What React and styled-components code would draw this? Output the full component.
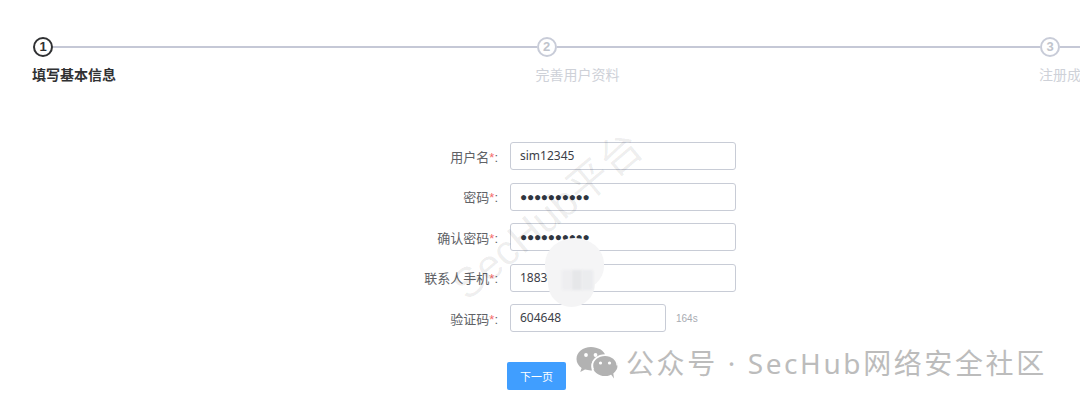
import React from 'react'
import styled, { createGlobalStyle } from 'styled-components'

const GlobalStyle = createGlobalStyle`
  html, body {
    margin: 0;
    background: #fff;
    font-family: "Liberation Sans", "Noto Sans CJK SC", sans-serif;
  }
`

const Page = styled.div`
  position: relative;
  width: 1080px;
  height: 408px;
  overflow: hidden;
  background: #fff;
`

const Steps = styled.div`
  display: flex;
  padding: 37px 0 0 33px;
  width: 1600px;
`

const Step = styled.div`
  width: 503.5px;
  flex: none;
`

const StepHead = styled.div`
  display: flex;
  align-items: center;
  height: 20px;
`

const Circle = styled.span`
  flex: none;
  box-sizing: border-box;
  width: 20px;
  height: 20px;
  border-radius: 50%;
  border: 2px solid ${p => (p.$active ? '#303133' : '#c8ccd8')};
  color: ${p => (p.$active ? '#303133' : '#c0c4cc')};
  font-size: 13px;
  font-weight: 700;
  line-height: 16px;
  text-align: center;
`

const Line = styled.span`
  flex: 1;
  height: 2px;
  background: #c5c8d6;
`

const StepTitle = styled.div`
  margin: 8px 0 0 -1px;
  font-size: 14px;
  line-height: 20px;
  font-weight: ${p => (p.$active ? 700 : 400)};
  color: ${p => (p.$active ? '#303133' : '#ced1d8')};
`

const Form = styled.form`
  margin: 57px 0 0 343px;
  width: 420px;
  display: flex;
  flex-direction: column;
  gap: 12.5px;
`

const Row = styled.div`
  display: flex;
  align-items: center;
  height: 28px;
`

const Label = styled.label`
  width: 155px;
  flex: none;
  text-align: right;
  font-size: 13px;
  color: #606266;
`

const Star = styled.span`
  color: #f56c6c;
`

const Input = styled.div`
  margin-left: 12px;
  box-sizing: border-box;
  width: ${p => (p.$short ? '156px' : '226px')};
  height: 28px;
  padding: 0 9px;
  border: 1px solid #c8ccd6;
  border-radius: 3px;
  font-family: "Noto Sans", sans-serif;
  font-size: 12px;
  line-height: 26px;
  color: #3c4048;
`

const Dots = styled.span`
  font-family: "Liberation Sans", sans-serif;
  font-size: 12px;
  letter-spacing: -0.3px;
  color: #303640;
`

const Countdown = styled.span`
  margin-left: 10px;
  font-size: 10px;
  color: #a8abb2;
`

const NextButton = styled.button`
  display: block;
  margin: 17px 0 0 164px;
  width: 59px;
  height: 28px;
  padding: 0;
  border: 0;
  border-radius: 2px;
  background: #409eff;
  color: #fff;
  font-family: inherit;
  font-size: 11px;
`

const SiteMark = styled.div`
  position: absolute;
  left: 428px;
  top: 182px;
  font-size: 42px;
  color: rgba(0, 0, 0, 0.07);
  white-space: nowrap;
  transform: rotate(-40deg);
  pointer-events: none;
`

const BlurTop = styled.div`
  position: absolute;
  left: 545px;
  top: 238px;
  width: 59px;
  height: 52px;
  border-radius: 50% 50% 45% 45%;
  background: #f5f5f6;
`

const BlurBottom = styled.div`
  position: absolute;
  left: 548px;
  top: 270px;
  width: 47px;
  height: 37px;
  border-radius: 4px 4px 24px 24px;
  background: #f4f4f5;
`

const BlurBlock = styled.div`
  position: absolute;
  left: ${p => p.$x}px;
  top: 270px;
  width: ${p => p.$w}px;
  height: 20px;
  background: ${p => p.$color};
  filter: blur(1px);
`

const Credit = styled.div`
  position: absolute;
  left: 576px;
  top: 344px;
  display: flex;
  align-items: center;
  gap: 8px;
  font-family: "Noto Sans", "Noto Sans CJK SC", sans-serif;
  font-size: 28px;
  letter-spacing: 2.6px;
  line-height: 38px;
  color: #bcbcbc;
  white-space: nowrap;
`

const WechatIcon = () => (
  <svg width="42" height="34" viewBox="0 0 42 34">
    <path fill="#b2b2b2" d="M15 1C6.8 1 .5 6.4.5 13c0 3.7 2 6.8 5.100 9l-1.300 4 4.700-2.400c1.800.5 3.800.8 5.800.8h1.200c-.5-1.300-.7-2.600-.7-4 0-6.300 5.800-11.200 13-11.200h1C28 4.600 22 1 15 1z" />
    <ellipse fill="#b2b2b2" cx="29" cy="19.500" rx="12.500" ry="10.500" />
    <path fill="#b2b2b2" d="M34 27l4 5.500-1-7z" />
    <path fill="#fff" d="M15.500 19.500c0-6.300 6-11.200 13.500-11.200 7.500 0 13 4.900 13 11.200H40.500c0-5.200-5-9.500-11.500-9.500s-11.800 4.300-11.800 9.500c0 1.500.3 2.800 1 4.100h-1.700c-.6-1.300-1-2.600-1-4.100z" />
    <circle fill="#fff" cx="10" cy="9" r="1.900" />
    <circle fill="#fff" cx="19.500" cy="9" r="1.900" />
    <circle fill="#fff" cx="24.500" cy="17" r="1.600" />
    <circle fill="#fff" cx="33.500" cy="17" r="1.600" />
  </svg>
)

const steps = ['填写基本信息', '完善用户资料', '注册成功']

const fields = [
  { label: '用户名', value: 'sim12345' },
  { label: '密码', value: '●●●●●●●●●●', secret: true },
  { label: '确认密码', value: '●●●●●●●●●●', secret: true },
  { label: '联系人手机', value: '1883000000.' },
  { label: '验证码', value: '604648', short: true, extra: '164s' },
]

const App = () => {
  return (
    <Page>
      <GlobalStyle />
      <Steps>
        {steps.map((title, i) => (
          <Step key={title}>
            <StepHead>
              <Circle $active={i === 0}>{i + 1}</Circle>
              <Line />
            </StepHead>
            <StepTitle $active={i === 0}>{title}</StepTitle>
          </Step>
        ))}
      </Steps>
      <Form>
        {fields.map(field => (
          <Row key={field.label}>
            <Label>
              {field.label}
              <Star>*</Star>:
            </Label>
            <Input $short={field.short}>
              {field.secret ? <Dots>{field.value}</Dots> : field.value}
            </Input>
            {field.extra && <Countdown>{field.extra}</Countdown>}
          </Row>
        ))}
        <NextButton type="button">下一页</NextButton>
      </Form>
      <SiteMark>SecHub平台</SiteMark>
      <BlurTop />
      <BlurBottom />
      <BlurBlock $x={562} $w={10} $color="#eeeef0" />
      <BlurBlock $x={572} $w={10} $color="#e6e7e9" />
      <BlurBlock $x={582} $w={11} $color="#ebecee" />
      <Credit>
        <WechatIcon />
        <span>公众号 · SecHub网络安全社区</span>
      </Credit>
    </Page>
  )
}

export default App
